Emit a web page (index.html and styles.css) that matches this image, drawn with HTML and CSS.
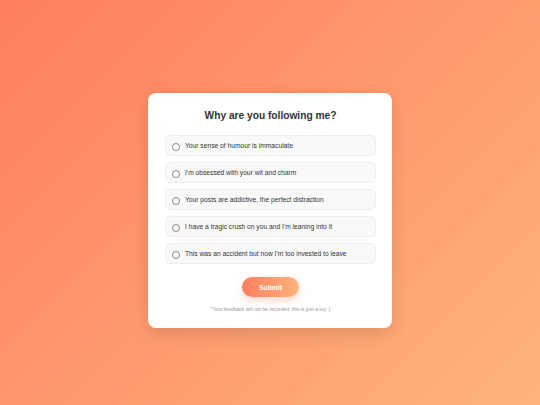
FILE: index.html
```html
<!DOCTYPE html>
<html>
<head>
<meta charset="utf-8">
<link rel="stylesheet" href="styles.css">
</head>
<body>
<div class="card">
  <h1 class="title">Why are you following me?</h1>
  <div class="options">
    <label class="option"><span class="radio"></span><span>Your sense of humour is immaculate</span></label>
    <label class="option"><span class="radio"></span><span>I'm obsessed with your wit and charm</span></label>
    <label class="option"><span class="radio"></span><span>Your posts are addictive, the perfect distraction</span></label>
    <label class="option"><span class="radio"></span><span>I have a tragic crush on you and I'm leaning into it</span></label>
    <label class="option"><span class="radio"></span><span>This was an accident but now I'm too invested to leave</span></label>
  </div>
  <div class="actions"><button class="submit">Submit</button></div>
  <p class="note">*Your feedback will not be recorded, this is just a toy :)</p>
</div>
</body>
</html>
```
FILE: styles.css
```css
html, body {
  margin: 0;
  height: 100%;
}
body {
  font-family: "Liberation Sans", Arial, sans-serif;
  background: linear-gradient(135deg, #ff7e5f 0%, #feb47b 100%);
  display: flex;
  justify-content: center;
  align-items: center;
  padding-top: 16px;
  box-sizing: border-box;
}
.card {
  width: 244px;
  box-sizing: border-box;
  background: #fff;
  border-radius: 8px;
  padding: 17px 16px 16px 17px;
  box-shadow: 0 6px 18px rgba(0, 0, 0, 0.12);
}
.title {
  margin: 0 0 13px;
  text-align: center;
  font-size: 10.2px;
  font-weight: bold;
  color: #333;
  line-height: 12px;
}
.options {
  display: flex;
  flex-direction: column;
  gap: 6px;
}
.option {
  display: flex;
  align-items: center;
  height: 21px;
  box-sizing: border-box;
  padding: 0 6px;
  background: #f9f9f9;
  border: 1px solid #efefef;
  border-radius: 5px;
  font-size: 6.7px;
  color: #333;
}
.radio {
  width: 6px;
  height: 6px;
  border: 0.7px solid #8a8a8a;
  border-radius: 50%;
  margin-right: 5px;
  margin-top: 2px;
  flex: none;
  background: #fff;
}
.actions {
  display: flex;
  justify-content: center;
  margin-top: 13px;
}
.submit {
  width: 57px;
  height: 20px;
  border: none;
  border-radius: 10px;
  background: linear-gradient(90deg, #ff7e5f, #feb47b);
  color: #fff;
  font-family: "Liberation Sans", Arial, sans-serif;
  font-weight: bold;
  font-size: 6.8px;
  box-shadow: 0 3px 8px rgba(255, 126, 95, 0.35);
  padding: 0;
}
.note {
  margin: 9px 0 0;
  text-align: center;
  font-size: 5px;
  line-height: 6px;
  color: #999;
}
```
